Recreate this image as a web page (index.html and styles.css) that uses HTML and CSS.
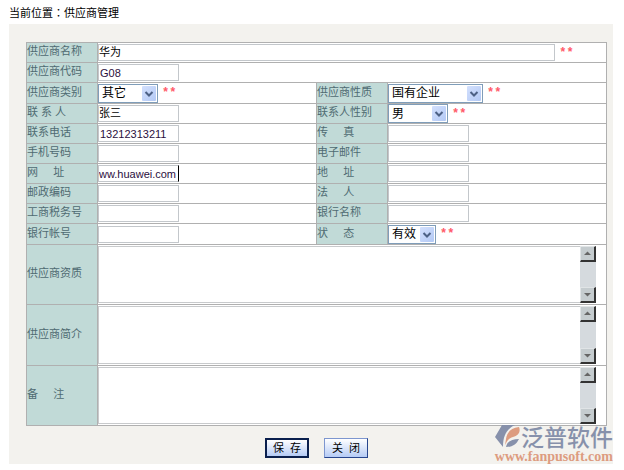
FILE: index.html
```
<!DOCTYPE html>
<html lang="zh-CN">
<head>
<meta charset="utf-8">
<title>供应商管理</title>
<link rel="stylesheet" href="styles.css">
</head>
<body>
<header class="crumb">当前位置<span class="colon" lang="zh-TW">：</span>供应商管理</header>
<main class="panel">
<form>
<div class="fields">
  <label class="label" for="name">供应商名称</label>
  <div class="cell span"><input class="text wide" id="name" value="华为"><span class="req">**</span></div>

  <label class="label" for="code">供应商代码</label>
  <div class="cell span"><input class="text" id="code" value="G08"></div>

  <label class="label" for="type">供应商类别</label>
  <div class="cell"><span class="pick w-60"><select id="type"><option>其它</option></select><svg class="arrow" viewBox="0 0 14 15"><path d="M3.5 6 7 9.500 10.500 6"/></svg></span><span class="req">**</span></div>
  <label class="label" for="nature">供应商性质</label>
  <div class="cell"><span class="pick w-95"><select id="nature"><option>国有企业</option></select><svg class="arrow" viewBox="0 0 14 15"><path d="M3.5 6 7 9.500 10.500 6"/></svg></span><span class="req">**</span></div>

  <label class="label" for="contact">联 系 人</label>
  <div class="cell"><input class="text" id="contact" value="张三"></div>
  <label class="label" for="sex">联系人性别</label>
  <div class="cell"><span class="pick w-60"><select id="sex"><option>男</option></select><svg class="arrow" viewBox="0 0 14 15"><path d="M3.5 6 7 9.500 10.500 6"/></svg></span><span class="req">**</span></div>

  <label class="label" for="phone">联系电话</label>
  <div class="cell"><input class="text" id="phone" value="13212313211"></div>
  <label class="label" for="fax">传     真</label>
  <div class="cell"><input class="text" id="fax"></div>

  <label class="label" for="mobile">手机号码</label>
  <div class="cell"><input class="text" id="mobile"></div>
  <label class="label" for="mail">电子邮件</label>
  <div class="cell"><input class="text" id="mail"></div>

  <label class="label" for="site">网     址</label>
  <div class="cell"><input class="text" id="site" value="ww.huawei.com"></div>
  <label class="label" for="address">地     址</label>
  <div class="cell"><input class="text" id="address"></div>

  <label class="label" for="zip">邮政编码</label>
  <div class="cell"><input class="text" id="zip"></div>
  <label class="label" for="legal">法     人</label>
  <div class="cell"><input class="text" id="legal"></div>

  <label class="label" for="tax">工商税务号</label>
  <div class="cell"><input class="text" id="tax"></div>
  <label class="label" for="bank">银行名称</label>
  <div class="cell"><input class="text" id="bank"></div>

  <label class="label" for="account">银行帐号</label>
  <div class="cell"><input class="text" id="account"></div>
  <label class="label" for="status">状     态</label>
  <div class="cell"><span class="pick w-48"><select id="status"><option>有效</option></select><svg class="arrow" viewBox="0 0 14 15"><path d="M3.5 6 7 9.500 10.500 6"/></svg></span><span class="req">**</span></div>

  <label class="label" for="credentials">供应商资质</label>
  <div class="cell span area"><textarea id="credentials"></textarea><div class="scroll"><svg class="step" viewBox="0 0 13 13"><path d="M3 8h7L6.500 4.500z"/></svg><svg class="step" viewBox="0 0 13 13"><path d="M3 5h7L6.500 8.500z"/></svg></div></div>

  <label class="label" for="profile">供应商简介</label>
  <div class="cell span area"><textarea id="profile"></textarea><div class="scroll"><svg class="step" viewBox="0 0 13 13"><path d="M3 8h7L6.500 4.500z"/></svg><svg class="step" viewBox="0 0 13 13"><path d="M3 5h7L6.500 8.500z"/></svg></div></div>

  <label class="label" for="note">备     注</label>
  <div class="cell span area"><textarea id="note"></textarea><div class="scroll"><svg class="step" viewBox="0 0 13 13"><path d="M3 8h7L6.500 4.500z"/></svg><svg class="step" viewBox="0 0 13 13"><path d="M3 5h7L6.500 8.500z"/></svg></div></div>
</div>
<div class="actions">
  <button class="btn primary" type="submit">保&nbsp; 存</button>
  <button class="btn" type="button">关&nbsp; 闭</button>
</div>
</form>
<div class="mark">
  <div class="brand">
    <svg class="logo" viewBox="0 0 26 23"><path fill="#8791ab" d="M7 0h13C12 4 8 10 8 22L0 12z"/><path fill="#dd9c80" d="M11 14C12 7 16 3 24 2c2 5-1 9-6 10-4 1-6 4-8 8z"/><path fill="#8791ab" d="M11 22c1-5 5-8 13-8-3 6-7 8-13 8z"/></svg>
    <span>泛普软件</span>
  </div>
  <div class="url">www.fanpusoft.com</div>
</div>
</main>
</body>
</html>
```
FILE: styles.css
```
* { box-sizing: border-box; }

body {
  margin: 0;
  padding: 0 11px 7px 9px;
  background: #fff;
  font: 11px/16px "Liberation Sans", "Noto Sans CJK SC", sans-serif;
  color: #000;
}

.crumb { padding: 5px 0 3px; }

.colon {
  font-family: "Noto Sans CJK TC", sans-serif;
  line-height: 1;
}

.panel {
  position: relative;
  padding: 18px 6px 6px 17px;
  background: #f3f2ee;
}

.fields {
  display: grid;
  grid-template-columns: 70px 1fr 70px 1fr;
  grid-template-rows: 19px 19px 20px repeat(6, 19px) 20px 59px 60px 59px;
  gap: 1px;
  padding: 1px;
  background: #b0b0b0;
}

.label {
  display: flex;
  align-items: center;
  padding-bottom: 3px;
  background: #c1dad7;
  color: #4f6b72;
  white-space: pre;
}

.cell {
  display: flex;
  align-items: center;
  min-width: 0;
  background: #fff;
}

.span { grid-column: span 3; }

.text {
  width: 81px;
  height: 17px;
  padding: 0 1px;
  border: 1px solid #c3c7cb;
  background: #fff;
  font: inherit;
  color: #000;
  outline: 0;
}

#name, #contact { padding: 0 0 3px; }

#code, #phone, #site { color: #2b1040; }

.wide { width: 90%; }

#site {
  padding: 0;
  border-right-color: #000;
}

.req {
  margin-left: 4px;
  color: #ff5a68;
  font: bold 12px/12px "Liberation Mono", monospace;
}

.pick {
  position: relative;
  height: 19px;
}

.w-48 { width: 48px; }
.w-60 { width: 60px; }
.w-95 { width: 95px; }

select {
  appearance: none;
  width: 100%;
  height: 100%;
  padding: 0 3px;
  border: 1px solid #7f9db9;
  border-radius: 0;
  background: #fff;
  color: #000;
  font: 12px/16px "Liberation Sans", "Noto Sans CJK SC", sans-serif;
}

.arrow {
  position: absolute;
  top: 2px;
  right: 2px;
  width: 14px;
  height: 15px;
  border-radius: 1px;
  background: linear-gradient(135deg, #d3e0fd, #b3c9f5);
  fill: none;
  stroke: #4d6185;
  stroke-width: 2;
  pointer-events: none;
}

.area { padding: 0 10px 0 0; }

textarea {
  flex: 1;
  align-self: stretch;
  margin: 1px 0;
  border: 1px solid #c8cacc;
  border-right: 0;
  background: #fff;
  font: inherit;
  resize: none;
  overflow: hidden;
}

.scroll {
  display: flex;
  flex-direction: column;
  justify-content: space-between;
  align-self: stretch;
  width: 16px;
  margin: 1px 0;
  background: #d5dade;
}

.step {
  width: 16px;
  height: 16px;
  border: 1px solid;
  border-color: #e0e4e6 #333 #333 #e0e4e6;
  border-right-width: 2px;
  border-bottom-width: 2px;
  background: #c5cccf;
  fill: #666;
}

.actions {
  display: flex;
  justify-content: center;
  gap: 15px;
  padding-top: 12px;
}

.btn {
  width: 44px;
  height: 20px;
  padding: 0;
  border: 1px solid #3d5da5;
  border-color: #7d96cf #27458d #27458d #7d96cf;
  background: linear-gradient(#fff, #b5cbf5);
  color: #000;
  font: inherit;
}

.primary { border: 2px solid #0a1f4d; }

.mark {
  position: absolute;
  right: 0;
  bottom: 0;
  color: #8791ab;
  pointer-events: none;
}

.brand {
  display: flex;
  align-items: center;
  justify-content: flex-end;
  font: 500 23px/28px "Noto Sans CJK SC", sans-serif;
}

.logo {
  width: 26px;
  height: 23px;
}

.url {
  color: #dd9c80;
  font: bold 14px/14px "Liberation Serif", serif;
  text-align: right;
}
```
